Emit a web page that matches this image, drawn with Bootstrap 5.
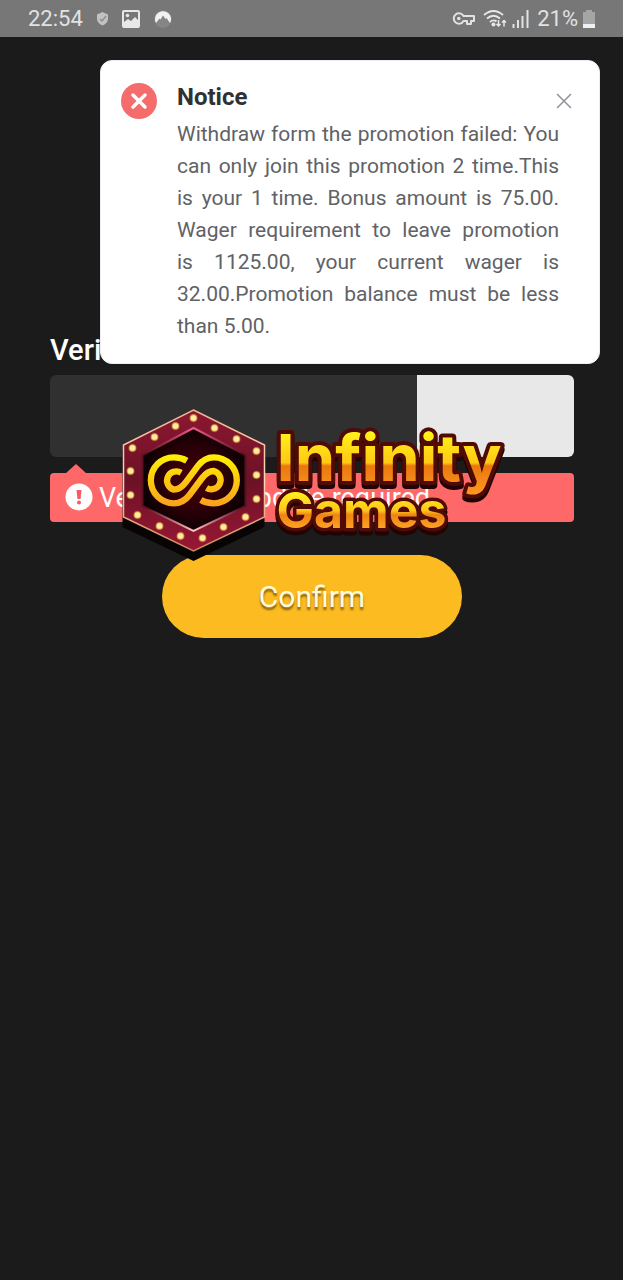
<!DOCTYPE html>
<html lang="en">
<head>
<meta charset="utf-8">
<meta name="viewport" content="width=device-width, initial-scale=1">
<title>Infinity Games - Verification</title>
<link href="https://cdn.jsdelivr.net/npm/bootstrap@5.3.0/dist/css/bootstrap.min.css" rel="stylesheet">
<style>
body { background: #1b1b1b; color: #fff; font-family: Roboto, sans-serif; }
.status-bar { background: #777; color: #e2e2e2; height: 37px; padding: 0 27px 0 28px; font-size: 22px; line-height: 37px; }
.status-left { gap: 14px; }
.verify-form { padding: 292px 49px 0 50px; }
.verify-label { font-size: 29px; line-height: 42px; font-weight: 500; margin-bottom: 4px; }
.code-group { height: 82px; }
.code-group .form-control, .code-group .form-control:focus { background: #303030; border: 0; border-radius: 6px 0 0 6px; color: #fff; font-size: 28px; box-shadow: none; }
.code-image { width: 30%; background: #e8e8e8; border: 0; border-radius: 0 6px 6px 0; }
.error-tip { margin-top: 16px; height: 49px; padding: 2px 15px 0; gap: 6px; background: #ff6868; border-radius: 4px; font-size: 27px; }
.error-tip::before { content: ""; position: absolute; left: 16px; bottom: 100%; border: solid transparent; border-width: 0 10px 9px; border-bottom-color: #ff6868; }
.btn-confirm { width: 300px; height: 83px; margin-top: 33px; border: 0; border-radius: 42px; background: #fbbb21; color: #fffbe0; font-size: 30px; text-shadow: 0 3px 2px rgba(90, 60, 0, .7); }
.btn-confirm:hover { background: #ffc73f; color: #fff; }
.brand-logo { top: 367px; width: 391px; pointer-events: none; }
.brand-text { font-family: Inter, sans-serif; font-weight: 700; stroke: #500b06; stroke-linejoin: round; paint-order: stroke; filter: drop-shadow(0 4px 0 #210404); }
.notice { top: 60px; right: 23px; width: 500px; max-width: 82%; padding: 20px 40px 21px 20px; gap: 20px; background: #fff; border: 1px solid #ebeef5; border-radius: 12px; box-shadow: none; color: #606266; }
.notice h2 { color: #303133; font-size: 24px; line-height: 32px; font-weight: 700; }
.notice p { font-size: 21px; line-height: 32px; text-align: justify; margin-top: 5px; }
.notice-close { top: 32px; right: 27px; line-height: 0; }
</style>
</head>
<body>
<header class="status-bar d-flex justify-content-between align-items-center">
  <div class="status-left d-flex align-items-center">
    <span>22:54</span>
    <svg width="11" height="14" viewBox="0 0 11 14"><path d="M5.500 0 11 2.500v4Q11 11 5.500 13.500 0 11 0 6.500v-4z" fill="#c2c2c2"/><path d="m3 7 2 2 4-5" fill="none" stroke="#8e8e8e" stroke-width="1.500"/></svg>
    <svg width="18" height="18" viewBox="0 0 18 18"><rect x="1" y="1" width="16" height="16" rx="1" fill="none" stroke="#e8e8e8" stroke-width="2"/><circle cx="5.500" cy="5.500" r="1.800" fill="#e8e8e8"/><path d="M2 16v-4l4-3 3 2 4-4 4 4v5z" fill="#e8e8e8"/></svg>
    <svg width="18" height="18" viewBox="0 0 18 18"><circle cx="9" cy="9" r="9" fill="#858585"/><path d="M2 13A8 8 0 1 1 16 13L12.500 8l-1 1L9 5.500l-2.500 4-1-1z" fill="#f2f2f2"/></svg>
  </div>
  <div class="d-flex align-items-center">
    <svg width="23" height="15" viewBox="0 0 23 15"><path d="M11.500 5H22v5h-3v3h-4v-3h-3.500a5.200 5.200 0 1 1 0-5z" fill="none" stroke="#e2e2e2" stroke-width="2" stroke-linejoin="round"/><circle cx="6.800" cy="7.500" r="1.800" fill="#e2e2e2"/></svg>
    <svg class="ms-2" width="25" height="19" viewBox="0 0 25 19"><g fill="none" stroke="#e8e8e8" stroke-width="1.800"><path d="M1 6Q10.500-2 20 6M4 9.500q6.500-5.500 13 0M7 13q3.500-3 6.500-.500"/><path d="M15.500 11v6m-2-2 2 2 2-2M21 17.500v-6m-2 2 2-2 2 2" stroke-width="1.500"/></g><circle cx="10.500" cy="15.500" r="2" fill="#e8e8e8"/></svg>
    <svg class="ms-1" width="17" height="18" viewBox="0 0 17 18"><path d="M1.500 14v4M6 10v8M10.500 6v12M15.500 0v18" stroke="#e2e2e2" stroke-width="2"/></svg>
    <span class="ms-2">21%</span>
    <svg class="ms-1" width="14" height="18" viewBox="0 0 14 18"><path d="M4 0h6v2h3v12H1V2h3z" fill="#a5a5a5"/><path d="M1 14h12v4H1z" fill="#f0f0f0"/></svg>
  </div>
</header>

<main class="position-relative">
  <form class="verify-form">
    <label class="verify-label d-block" for="code">Verification Code</label>
    <div class="code-group d-flex">
      <input class="form-control" id="code" type="text" autocomplete="off">
      <button class="code-image flex-shrink-0" type="button" aria-label="Refresh code"></button>
    </div>
    <div class="error-tip position-relative d-flex align-items-center text-nowrap" role="alert">
      <svg class="mb-1" width="28" height="28" viewBox="0 0 28 28"><circle cx="14" cy="14" r="13.500" fill="#fff"/><path d="M11.500 7h5l-1 9h-3z" fill="#f25c62"/><circle cx="14" cy="19.500" r="2" fill="#f25c62"/></svg>
      <span>Verification update required</span>
    </div>
    <button class="btn btn-confirm d-block mx-auto" type="button">Confirm</button>
  </form>

  <svg class="brand-logo position-absolute start-50 translate-middle-x" viewBox="116 404 391 160" role="img" aria-label="Infinity Games">
    <defs>
      <linearGradient id="gold" gradientUnits="userSpaceOnUse" x1="0" y1="162" x2="0" y2="320"><stop offset="0" stop-color="#fff200"/><stop offset="1" stop-color="#faa01e"/></linearGradient>
      <linearGradient id="goldTop" gradientUnits="userSpaceOnUse" x1="0" y1="432" x2="0" y2="496"><stop offset="0" stop-color="#fff21a"/><stop offset=".48" stop-color="#ffc914"/><stop offset=".53" stop-color="#e9780f"/><stop offset="1" stop-color="#ff9a22"/></linearGradient>
      <linearGradient id="goldLow" gradientUnits="userSpaceOnUse" x1="0" y1="492" x2="0" y2="529"><stop offset="0" stop-color="#fff21a"/><stop offset=".5" stop-color="#ffc51c"/><stop offset=".62" stop-color="#ee8412"/><stop offset="1" stop-color="#ffa428"/></linearGradient>
      <linearGradient id="frame" x1="0" y1="0" x2="0" y2="1"><stop offset="0" stop-color="#8c1731"/><stop offset=".5" stop-color="#6c1226"/><stop offset="1" stop-color="#991735"/></linearGradient>
      <linearGradient id="rim" x1="0" y1="0" x2="0" y2="1"><stop offset="0" stop-color="#e8b48c"/><stop offset=".5" stop-color="#ffd9b8"/><stop offset="1" stop-color="#c9854f"/></linearGradient>
      <linearGradient id="bevel" x1="0" y1="0" x2="0" y2="1"><stop offset="0" stop-color="#f0588c"/><stop offset=".25" stop-color="#5c1020"/><stop offset=".78" stop-color="#5c1020"/><stop offset="1" stop-color="#ffc4c4"/></linearGradient>
      <radialGradient id="core"><stop offset="0" stop-color="#4a000c"/><stop offset=".6" stop-color="#2c0008"/><stop offset="1" stop-color="#0d0003"/></radialGradient>
    </defs>
    <path d="M122 450v77l71 34 71-34v-77z" fill="#080404"/>
    <path d="M193 410 264 445v72l-71 34-70-34v-72z" fill="url(#frame)" stroke="url(#rim)" stroke-width="1.500"/>
    <path d="M193 428 245 455v51l-52 25-51-25v-51z" fill="url(#core)" stroke="url(#bevel)" stroke-width="2"/>
    <g fill="#ffec9e" stroke="#c47a2c" stroke-opacity=".6" stroke-width="1.500">
      <circle cx="193" cy="418" r="3.500"/><circle cx="214" cy="428" r="3.500"/><circle cx="236" cy="439" r="3.500"/><circle cx="256" cy="451" r="3.500"/><circle cx="256" cy="475" r="3.500"/><circle cx="256" cy="499" r="3.500"/><circle cx="245" cy="517" r="3.500"/><circle cx="223" cy="527" r="3.500"/><circle cx="202" cy="538" r="3.500"/><circle cx="180" cy="536" r="3.500"/><circle cx="159" cy="526" r="3.500"/><circle cx="137" cy="515" r="3.500"/><circle cx="130" cy="495" r="3.500"/><circle cx="130" cy="471" r="3.500"/><circle cx="132" cy="448" r="3.500"/><circle cx="154" cy="437" r="3.500"/><circle cx="175" cy="426" r="3.500"/>
    </g>
    <g transform="translate(110 400) scale(.3333)" fill="none" stroke="url(#gold)" stroke-width="19">
      <path d="M229 182Q212 172 190 172A69 69 0 0 0 190 310Q218 310 237 285L275 234Q291 213 310 213A28 28 0 1 1 288 264"/>
      <path d="M271 300Q288 310 310 310A69 69 0 0 0 310 172Q282 172 263 197L225 248Q209 269 190 269A28 28 0 1 1 212 218"/>
    </g>
    <g class="brand-text">
      <text x="276" y="481" font-size="65" stroke-width="8" fill="url(#goldTop)">Infinity</text>
      <text x="276" y="528" font-size="50" stroke-width="7" fill="url(#goldLow)">Games</text>
    </g>
  </svg>
</main>

<div class="notice toast show position-absolute d-flex align-items-start" role="alert">
  <svg class="flex-shrink-0" width="36" height="40" viewBox="0 0 36 40"><circle cx="18" cy="20" r="18" fill="#f56c6c"/><path d="m12 14 12 12m0-12L12 26" stroke="#fff" stroke-width="3.500" stroke-linecap="round"/></svg>
  <div class="flex-grow-1">
    <h2 class="mb-0">Notice</h2>
    <p class="mb-0">Withdraw form the promotion failed: You can only join this promotion 2 time.This is your 1 time. Bonus amount is 75.00. Wager requirement to leave promotion is&nbsp;1125.00, your current wager is 32.00.Promotion balance must be less than 5.00.</p>
  </div>
  <button class="notice-close btn p-0 border-0 position-absolute" type="button" aria-label="Close"><svg width="16" height="16" viewBox="0 0 16 16"><path d="m1 1 14 14M15 1 1 15" stroke="#909399" stroke-width="1.500"/></svg></button>
</div>
<script src="https://cdn.jsdelivr.net/npm/bootstrap@5.3.0/dist/js/bootstrap.bundle.min.js"></script>
</body>
</html>
